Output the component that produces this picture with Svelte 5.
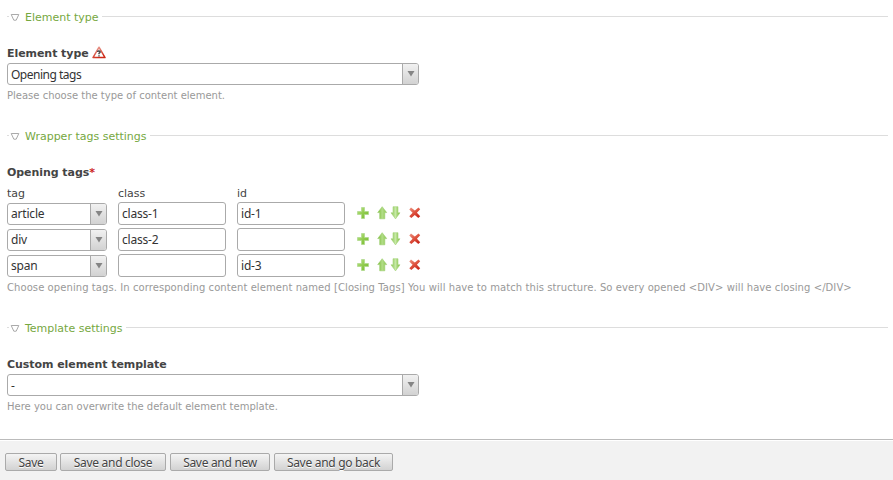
<script>
  const rows = [
    { tag: 'article', cls: 'class-1', id: 'id-1' },
    { tag: 'div', cls: 'class-2', id: '' },
    { tag: 'span', cls: '', id: 'id-3' }
  ];
  const buttons = [
    { text: 'Save', width: 52 },
    { text: 'Save and close', width: 106 },
    { text: 'Save and new', width: 100 },
    { text: 'Save and go back', width: 119 }
  ];
</script>

{#snippet legend(text)}
  <div class="legend">
    <i class="dash"></i>
    <svg width="10" height="9" viewBox="0 0 10 9"><path d="M1.2 1.5h7.6L6.2 7.2H3.8z" fill="#fff" stroke="#aaa" /></svg>
    <span>{text}</span>
    <i class="line"></i>
  </div>
{/snippet}

{#snippet select(text)}
  <div class="select">
    <span class="value">{text}</span>
    <span class="arrow"><svg width="8" height="6" viewBox="0 0 8 6"><path d="M.5 0h7L4 5.5z" fill="#858585" /></svg></span>
  </div>
{/snippet}

<main>
  <section class="first">
    {@render legend('Element type')}
    <div class="label"><span>Element type</span>
      <svg width="14" height="13" viewBox="0 0 14 13">
        <defs><linearGradient id="warn" x2=".5" y2="1"><stop stop-color="#ecaaa0" /><stop offset="1" stop-color="#ce2b18" /></linearGradient></defs>
        <path d="M7 1.2L13 11.6H1z" fill="#fff" stroke="url(#warn)" stroke-width="1.5" stroke-linejoin="round" />
        <path d="M5.6 6q0-1.1 1.3-1.1T8.2 6Q8.2 6.8 7 7.3v.9M7 9.2v1.2" fill="none" stroke="#333" stroke-width="1.3" />
      </svg>
    </div>
    {@render select('Opening tags')}
    <p>Please choose the type of content element.</p>
  </section>

  <section class="second">
    {@render legend('Wrapper tags settings')}
    <div class="label"><span>Opening tags<b class="required">*</b></span></div>
    <div class="heads"><span>tag</span><span>class</span><span>id</span></div>
    {#each rows as row}
      <div class="row">
        {@render select(row.tag)}
        <div class="input">{row.cls}</div>
        <div class="input">{row.id}</div>
        <svg class="tools" width="64" height="14" viewBox="0 0 64 14">
          <defs>
            <linearGradient id="plus" x2="1" y2="1"><stop stop-color="#bde58d" /><stop offset=".5" stop-color="#91cc4e" /><stop offset="1" stop-color="#75b72e" /></linearGradient>
            <linearGradient id="up" x2="1"><stop stop-color="#75b82e" /><stop offset=".5" stop-color="#b2dd88" /><stop offset="1" stop-color="#8bc64d" /></linearGradient>
            <linearGradient id="down" x2="1"><stop stop-color="#86c44d" /><stop offset=".5" stop-color="#c6e8a6" /><stop offset="1" stop-color="#75b82e" /></linearGradient>
            <linearGradient id="cross" x2=".7" y2="1"><stop stop-color="#ec9684" /><stop offset=".5" stop-color="#df5642" /><stop offset="1" stop-color="#c9281c" /></linearGradient>
          </defs>
          <path d="M4.5 1.5h3v4h4v3h-4v4h-3v-4h-4v-3h4z" fill="url(#plus)" stroke="#add98a" stroke-width=".7" />
          <path d="M25.2 .7L29.7 6.6H27.8V12.8H22.7V6.6H20.7z" fill="url(#up)" stroke="#9bcd6c" stroke-width=".6" />
          <path d="M36 .7h5v6.1h2L38.5 12.9 34 6.8h2z" fill="url(#down)" stroke="#a5d47a" stroke-width=".6" />
          <path d="M54 1.6L57.8 4.6 61.5 1.6 63.2 3.2 59.9 6.7 63.2 10.2 61.3 12 57.8 9 54.3 12 52.3 10.2 55.6 6.7 52.3 3.6z" fill="url(#cross)" />
        </svg>
      </div>
    {/each}
    <p class="wide">Choose opening tags. In corresponding content element named [Closing Tags] You will have to match this structure. So every opened &lt;DIV&gt; will have closing &lt;/DIV&gt;</p>
  </section>

  <section class="third">
    {@render legend('Template settings')}
    <div class="label"><span>Custom element template</span></div>
    {@render select('-')}
    <p>Here you can overwrite the default element template.</p>
  </section>

  <footer>
    {#each buttons as button}
      <button style:width="{button.width}px">{button.text}</button>
    {/each}
  </footer>
</main>

<style>
  :global(body) { background: #fff; }
  main {
    width: 893px; height: 480px; overflow: hidden; box-sizing: border-box;
    display: flex; flex-direction: column; padding-top: 9px;
    font: 11px/16px "DejaVu Sans", Verdana, sans-serif; color: #444; white-space: nowrap;
  }
  section { padding: 0 5px 0 7px; box-sizing: border-box; flex: none; }
  .first { height: 119px; }
  .second { height: 192px; }
  .third { height: 119px; }
  .legend { height: 16px; display: flex; align-items: center; color: #76a83f; }
  .legend span { padding-top: 2px; }
  .legend svg { margin: 1px 5px 0 1px; flex: none; }
  .dash { width: 2px; height: 1px; margin-bottom: 1px; background: #ddd; }
  .line { flex: 1; height: 1px; margin: 0 0 1px 3px; background: #ddd; }
  .label {
    display: flex; align-items: center; height: 16px; margin-top: 20px;
    font-weight: bold; letter-spacing: -.06px;
  }
  .label span { padding-top: 2px; }
  .label svg { margin: 0 0 1px 3px; }
  .required { color: #c22; }
  .select {
    width: 412px; height: 22px; box-sizing: border-box; margin-top: 2px;
    border: 1px solid #aaa; border-radius: 3px; display: flex; overflow: hidden;
    font: 12px/20px "Noto Sans", sans-serif; color: #333;
  }
  .value { flex: 1; padding: 1px 0 0 3px; letter-spacing: -.5px; }
  .arrow {
    width: 15px; border-left: 1px solid #aaa; display: flex; align-items: center; justify-content: center;
    background: linear-gradient(#f1f1f1, #d2d2d2);
  }
  p { margin: 3px 0 0; font-size: 10px; line-height: 15px; color: #999; }
  .heads { display: flex; height: 16px; margin: 6px 0 0; }
  .heads span { width: 119px; }
  .heads span:first-child { width: 111px; }
  .row { height: 26px; display: flex; }
  .row .select { width: 100px; margin: 1px 11px 0 0; }
  .row .value { padding-top: 0; letter-spacing: -.2px; }
  .input {
    width: 108px; height: 23px; box-sizing: border-box; margin-right: 11px;
    border: 1px solid #aaa; border-radius: 3px; padding: 0 3px;
    font: 12px/21px "Noto Sans", sans-serif; color: #333; letter-spacing: -.2px;
  }
  .tools { margin: 4px 0 0 1px; }
  p.wide { margin-top: 0; letter-spacing: .075px; }
  footer {
    height: 41px; box-sizing: border-box; border-top: 1px solid #bbb; background: #f2f2f2;
    box-shadow: inset 0 1px #fff; padding: 13px 5px; display: flex; gap: 4px;
  }
  button {
    box-sizing: border-box; height: 18px; padding: 0; border: 1px solid #aaa; border-radius: 2px;
    background: linear-gradient(#f4f4f4, #d2d2d2); color: #444; text-shadow: 0 1px #fff;
    font: 12px/15px "Noto Sans", sans-serif; letter-spacing: -.3px;
  }
  button:first-child { margin-right: -1px; }
</style>
